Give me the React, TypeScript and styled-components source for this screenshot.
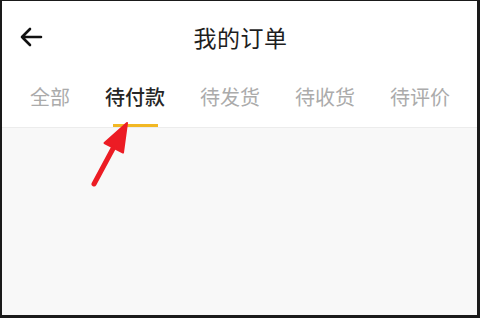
import { createGlobalStyle, styled } from "styled-components";

const tabs = ["全部", "待付款", "待发货", "待收货", "待评价"];
const active = 1;

export default function App() {
    return <>
        <Global />
        <Frame>
            <Header>
                <Back>
                    <svg width="24" height="22" viewBox="0 0 24 22">
                        <path d="M22 11H3M11 3L3 11L11 19" fill="none" stroke="#111" strokeWidth="2.6" strokeLinecap="round" strokeLinejoin="round" />
                    </svg>
                </Back>
                <Title>我的订单</Title>
                <div />
            </Header>
            <TabBar>
                {tabs.map((t, i) => <Tab key={t} on={i === active}>{t}</Tab>)}
            </TabBar>
            <Body />
            <Pointer width="480" height="318" viewBox="0 0 480 318">
                <line x1="94" y1="184" x2="116" y2="143" stroke="#ec1c24" strokeWidth="5" strokeLinecap="round" />
                <polygon points="127,123 123,152.5 104.5,143" fill="#ec1c24" stroke="#ec1c24" strokeWidth="2" strokeLinejoin="round" />
            </Pointer>
        </Frame>
    </>;
}

const Global = createGlobalStyle`
body{
    margin: 0;
    font-family: "Noto Sans CJK SC", "Noto Sans", sans-serif;
}
`

const Frame = styled.div`
position: relative;
width: 480px;
height: 318px;
box-sizing: border-box;
display: flex;
flex-direction: column;
background-color: #fff;
border-top: 1px solid #1a1a1a;
border-left: 2px solid #1a1a1a;
border-right: 3px solid #1a1a1a;
border-bottom: 3px solid #1a1a1a;
`

const Header = styled.div`
height: 72px;
display: grid;
grid-template-columns: 1fr auto 1fr;
align-items: center;
`

const Back = styled.div`
display: flex;
align-items: center;
padding-left: 17px;
`

const Title = styled.div`
font-size: 23px;
line-height: 24px;
color: #1e1e1e;
letter-spacing: 0.5px;
padding-left: 2px;
`

const TabBar = styled.div`
height: 54px;
display: flex;
gap: 35px;
padding-left: 28px;
border-bottom: 1px solid #ececec;
`

const Tab = styled.div<{ on: boolean }>`
position: relative;
padding-top: 14px;
font-size: 20px;
line-height: 20px;
color: ${({ on }) => on ? "#262626" : "#ababab"};
font-weight: ${({ on }) => on ? 500 : 400};
&::after{
    content: "";
    display: ${({ on }) => on ? "block" : "none"};
    position: absolute;
    left: 50%;
    bottom: 0;
    width: 45px;
    height: 3px;
    margin-left: -22px;
    background-color: #f2b824;
}
`

const Body = styled.div`
flex: 1;
background-color: #f8f8f8;
`

const Pointer = styled.svg`
position: absolute;
left: -2px;
top: -1px;
pointer-events: none;
`
